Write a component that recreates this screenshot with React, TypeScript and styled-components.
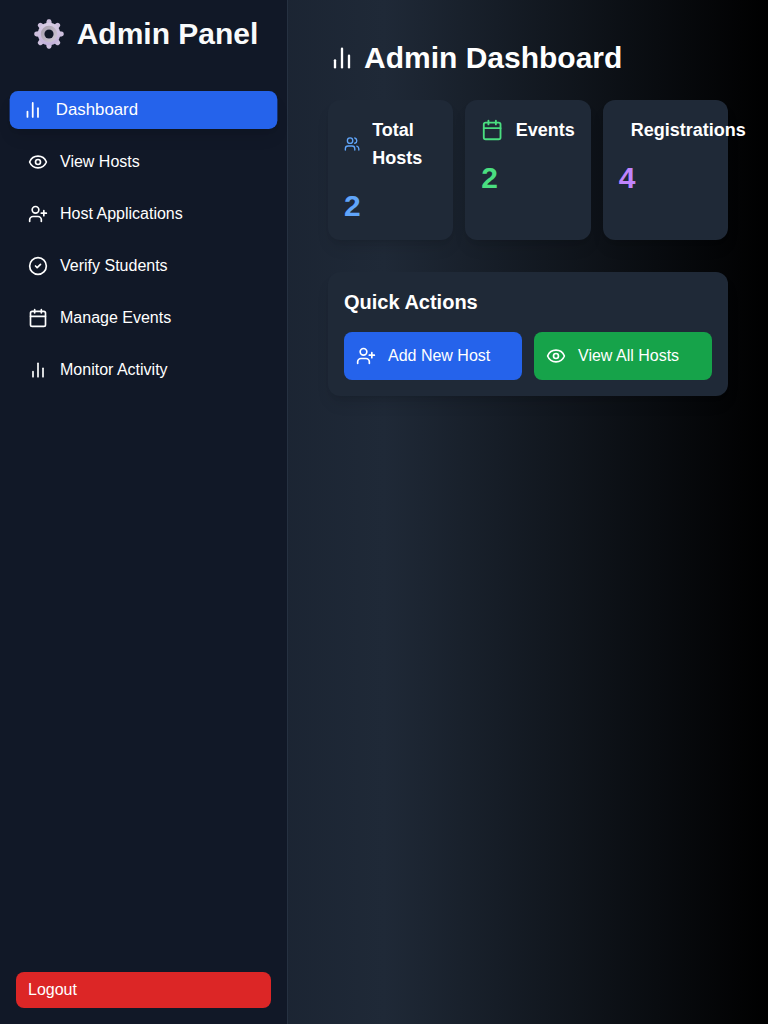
import React from "react";
import styled, { createGlobalStyle } from "styled-components";
import { Calendar, CircleCheck, ClipboardList, Eye, UserPlus, Users } from "lucide-react";

const GlobalStyle = createGlobalStyle`
  *, *::before, *::after { box-sizing: border-box; }
  body {
    margin: 0;
    font-family: "Liberation Sans", Arial, sans-serif;
    font-size: 16px;
    line-height: 24px;
    color: #ffffff;
    background: #000000;
  }
  h1, h2, h3, p, ul { margin: 0; padding: 0; }
  ul { list-style: none; }
`;

const Page = styled.div`
  display: flex;
  min-height: 100vh;
  background: linear-gradient(to right, #111827, #1f2937, #000000);
`;

const Sidebar = styled.aside`
  display: flex;
  flex-direction: column;
  flex: none;
  width: 288px;
  padding: 16px;
  background: #111827;
  border-right: 1px solid #263141;
`;

const Brand = styled.h2`
  display: flex;
  align-items: center;
  justify-content: center;
  gap: 8px;
  margin-bottom: 40px;
  font-size: 30px;
  line-height: 36px;
  color: #f9fafb;
  white-space: nowrap;
`;

const GearBox = styled.span`
  display: flex;
  justify-content: center;
  width: 40px;
`;

const NavList = styled.ul`
  display: flex;
  flex-direction: column;
  gap: 16px;
`;

const NavLink = styled.a<{ $active?: boolean }>`
  display: flex;
  align-items: center;
  gap: 12px;
  height: 36px;
  padding: 0 12px;
  border-radius: 8px;
  color: #ffffff;
  text-decoration: none;
  background: ${(p) => (p.$active ? "#2563eb" : "transparent")};
  transform: ${(p) => (p.$active ? "scale(1.05)" : "none")};
  box-shadow: ${(p) =>
    p.$active ? "0 10px 15px -3px rgba(0, 0, 0, 0.1), 0 4px 6px -4px rgba(0, 0, 0, 0.1)" : "none"};
`;

const LogoutButton = styled.button`
  height: 36px;
  margin-top: auto;
  padding: 0 12px;
  border: 0;
  border-radius: 8px;
  background: #dc2626;
  color: #ffffff;
  font: inherit;
  text-align: left;
  cursor: pointer;
`;

const Main = styled.main`
  flex: 1;
  min-width: 0;
  padding: 40px;
`;

const PageTitle = styled.h1`
  display: flex;
  align-items: center;
  gap: 8px;
  margin-bottom: 24px;
  font-size: 30px;
  line-height: 36px;
`;

const StatGrid = styled.div`
  display: grid;
  grid-template-columns: repeat(3, minmax(0, 1fr));
  gap: 12px;
  margin-bottom: 32px;
`;

const Card = styled.section`
  padding: 16px;
  border-radius: 12px;
  background: #1f2937;
  box-shadow: 0 10px 15px -3px rgba(0, 0, 0, 0.1), 0 4px 6px -4px rgba(0, 0, 0, 0.1);
`;

const StatHeader = styled.div<{ $color: string }>`
  display: flex;
  align-items: center;
  gap: 12px;
  margin-bottom: 16px;

  svg {
    min-width: 0;
    color: ${(p) => p.$color};
  }
`;

const StatTitle = styled.h3`
  font-size: 18px;
  line-height: 28px;
`;

const StatValue = styled.p<{ $color: string }>`
  font-size: 30px;
  line-height: 36px;
  font-weight: 700;
  color: ${(p) => p.$color};
`;

const SectionTitle = styled.h2`
  margin-bottom: 16px;
  font-size: 20px;
  line-height: 28px;
`;

const ActionGrid = styled.div`
  display: grid;
  grid-template-columns: repeat(2, minmax(0, 1fr));
  gap: 12px;
`;

const ActionButton = styled.button<{ $color: string }>`
  display: flex;
  align-items: center;
  gap: 12px;
  padding: 12px;
  border: 0;
  border-radius: 8px;
  background: ${(p) => p.$color};
  color: #ffffff;
  font: inherit;
  cursor: pointer;
`;

function BarsIcon({ size = 24 }: { size?: number }) {
  return (
    <svg
      width={size}
      height={size}
      viewBox="0 0 24 24"
      fill="none"
      stroke="currentColor"
      strokeWidth="2"
      strokeLinecap="round"
      strokeLinejoin="round"
      aria-hidden="true"
    >
      <path d="M18 20V10" />
      <path d="M12 20V4" />
      <path d="M6 20v-6" />
    </svg>
  );
}

const toothAngles = [0, 45, 90, 135, 180, 225, 270, 315];

function Gear() {
  return (
    <svg width="32" height="32" viewBox="0 0 32 32" aria-hidden="true">
      <defs>
        <linearGradient id="gearBody" x1="0" y1="1" x2="0" y2="31" gradientUnits="userSpaceOnUse">
          <stop offset="0" stopColor="#dcd2e6" />
          <stop offset="1" stopColor="#bfacd8" />
        </linearGradient>
        <linearGradient id="gearRing" x1="0" y1="0" x2="1" y2="1">
          <stop offset="0" stopColor="#a8a0ae" />
          <stop offset="1" stopColor="#cdc5d3" />
        </linearGradient>
      </defs>
      <g fill="#cdbfdd">
        {toothAngles.map((angle) => (
          <path
            key={angle}
            d="M13 8 L13.5 3.4 Q13.8 1.3 15.4 1.3 H16.6 Q18.2 1.3 18.5 3.4 L19 8 Z"
            transform={`rotate(${angle} 16 16)`}
          />
        ))}
      </g>
      <circle cx="16" cy="16" r="11.2" fill="url(#gearBody)" />
      <circle cx="16" cy="16" r="6.4" fill="none" stroke="url(#gearRing)" strokeWidth="3.6" />
      <circle cx="16" cy="16" r="4.6" fill="#111827" />
    </svg>
  );
}

const navItems = [
  { label: "Dashboard", Icon: BarsIcon, active: true },
  { label: "View Hosts", Icon: Eye },
  { label: "Host Applications", Icon: UserPlus },
  { label: "Verify Students", Icon: CircleCheck },
  { label: "Manage Events", Icon: Calendar },
  { label: "Monitor Activity", Icon: BarsIcon },
];

const stats = [
  { label: "Total Hosts", value: 2, color: "#60a5fa", Icon: Users },
  { label: "Events", value: 2, color: "#4ade80", Icon: Calendar },
  { label: "Registrations", value: 4, color: "#c084fc", Icon: ClipboardList },
];

const actions = [
  { label: "Add New Host", color: "#2563eb", Icon: UserPlus },
  { label: "View All Hosts", color: "#16a34a", Icon: Eye },
];

export default function App() {
  return (
    <>
      <GlobalStyle />
      <Page>
        <Sidebar>
          <Brand>
            <GearBox>
              <Gear />
            </GearBox>
            Admin Panel
          </Brand>
          <nav>
            <NavList>
              {navItems.map(({ label, Icon, active }) => (
                <li key={label}>
                  <NavLink href="#" $active={active} aria-current={active ? "page" : undefined}>
                    <Icon size={20} />
                    {label}
                  </NavLink>
                </li>
              ))}
            </NavList>
          </nav>
          <LogoutButton type="button">Logout</LogoutButton>
        </Sidebar>
        <Main>
          <PageTitle>
            <BarsIcon size={28} />
            Admin Dashboard
          </PageTitle>
          <StatGrid>
            {stats.map(({ label, value, color, Icon }) => (
              <Card key={label}>
                <StatHeader $color={color}>
                  <Icon size={24} />
                  <StatTitle>{label}</StatTitle>
                </StatHeader>
                <StatValue $color={color}>{value}</StatValue>
              </Card>
            ))}
          </StatGrid>
          <Card>
            <SectionTitle>Quick Actions</SectionTitle>
            <ActionGrid>
              {actions.map(({ label, color, Icon }) => (
                <ActionButton key={label} type="button" $color={color}>
                  <Icon size={20} />
                  {label}
                </ActionButton>
              ))}
            </ActionGrid>
          </Card>
        </Main>
      </Page>
    </>
  );
}
